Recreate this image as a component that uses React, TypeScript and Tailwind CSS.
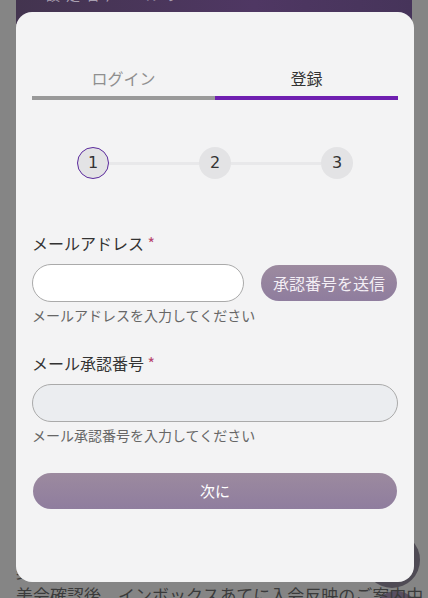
const jp = "font-['Noto_Sans_CJK_JP','Noto_Sans',sans-serif]";

function Step({ n, active }: { n: number; active?: boolean }) {
  return (
    <div
      className={`flex h-8 w-8 shrink-0 items-center justify-center rounded-full bg-[#e3e3e5] font-['DejaVu_Sans',sans-serif] text-[16px] text-[#333] ${
        active ? 'border border-[#5b2a9d]' : ''
      }`}
    >
      {n}
    </div>
  );
}

function Label({ text }: { text: string }) {
  return (
    <p className="text-[16px] leading-6 text-[#333]">
      {text} <span className="text-[#b9476f]">*</span>
    </p>
  );
}

export default function App() {
  return (
    <div className={`relative h-[598px] w-[428px] overflow-hidden bg-[#858585] ${jp}`}>
      {/* page behind the overlay */}
      <div className="mx-4 h-[40px] bg-[linear-gradient(90deg,#43344f,#4f3763_60%,#46345a)] px-[30px]">
        <p className="-mt-[16px] text-[14px] tracking-[6px] text-[#a89fb0]">設定音声ヘルプ</p>
      </div>
      <div className="absolute bottom-[10px] right-2 h-14 w-14 rounded-full bg-[#4f4b55]" />
      <div className="absolute -bottom-[39px] right-[9px] h-[46px] w-[46px] rounded-full bg-[#5a4f62]" />
      <div className="absolute -bottom-[9px] left-4 text-[17px] leading-[24px] text-[#3b3b3b]">
        <p className="whitespace-nowrap">美会員登録について</p>
        <p className="whitespace-nowrap">美会確認後、インボックスあてに入会反映のご案内中</p>
      </div>

      {/* modal */}
      <div className="absolute left-4 right-[14px] top-3 flex h-[570px] flex-col rounded-[16px] bg-[#f3f3f4] px-4 pt-[54px]">
        <div className="flex">
          <div className="flex-1 border-b-4 border-[#999] pb-[6px] text-center text-[16px] leading-6 text-[#8f8f8f]">
            ログイン
          </div>
          <div className="flex-1 border-b-4 border-[#6f1fb0] pb-[6px] text-center text-[16px] leading-6 text-[#333]">
            登録
          </div>
        </div>

        <div className="mt-[47px] flex items-center px-[45px]">
          <Step n={1} active />
          <div className="h-[3px] flex-1 bg-[#e8e8ea]" />
          <Step n={2} />
          <div className="h-[3px] flex-1 bg-[#e8e8ea]" />
          <Step n={3} />
        </div>

        <div className="mt-[52px]">
          <Label text="メールアドレス" />
          <div className="mt-[9px] flex items-center gap-[17px]">
            <input className="h-[38px] w-[212px] rounded-full border border-[#aaa] bg-white px-4 outline-none" />
            <button className="mr-px h-[36px] flex-1 whitespace-nowrap rounded-full bg-[linear-gradient(180deg,#9c8a9f,#8f7d9e)] text-[16px] text-[#f3eef5]">
              承認番号を送信
            </button>
          </div>
          <p className="mt-[3px] text-[14px] leading-5 text-[#666]">メールアドレスを入力してください</p>
        </div>

        <div className="mt-[26px]">
          <Label text="メール承認番号" />
          <input className="mt-[9px] block h-[38px] w-full rounded-full border border-[#aaa] bg-[#ebedf0] px-4 outline-none" />
          <p className="mt-[3px] text-[14px] leading-5 text-[#666]">メール承認番号を入力してください</p>
        </div>

        <button className="mx-px mt-[28px] h-[36px] rounded-full bg-[linear-gradient(180deg,#9c8a9f,#8f7d9e)] text-[15px] text-white">
          次に
        </button>
      </div>
    </div>
  );
}
